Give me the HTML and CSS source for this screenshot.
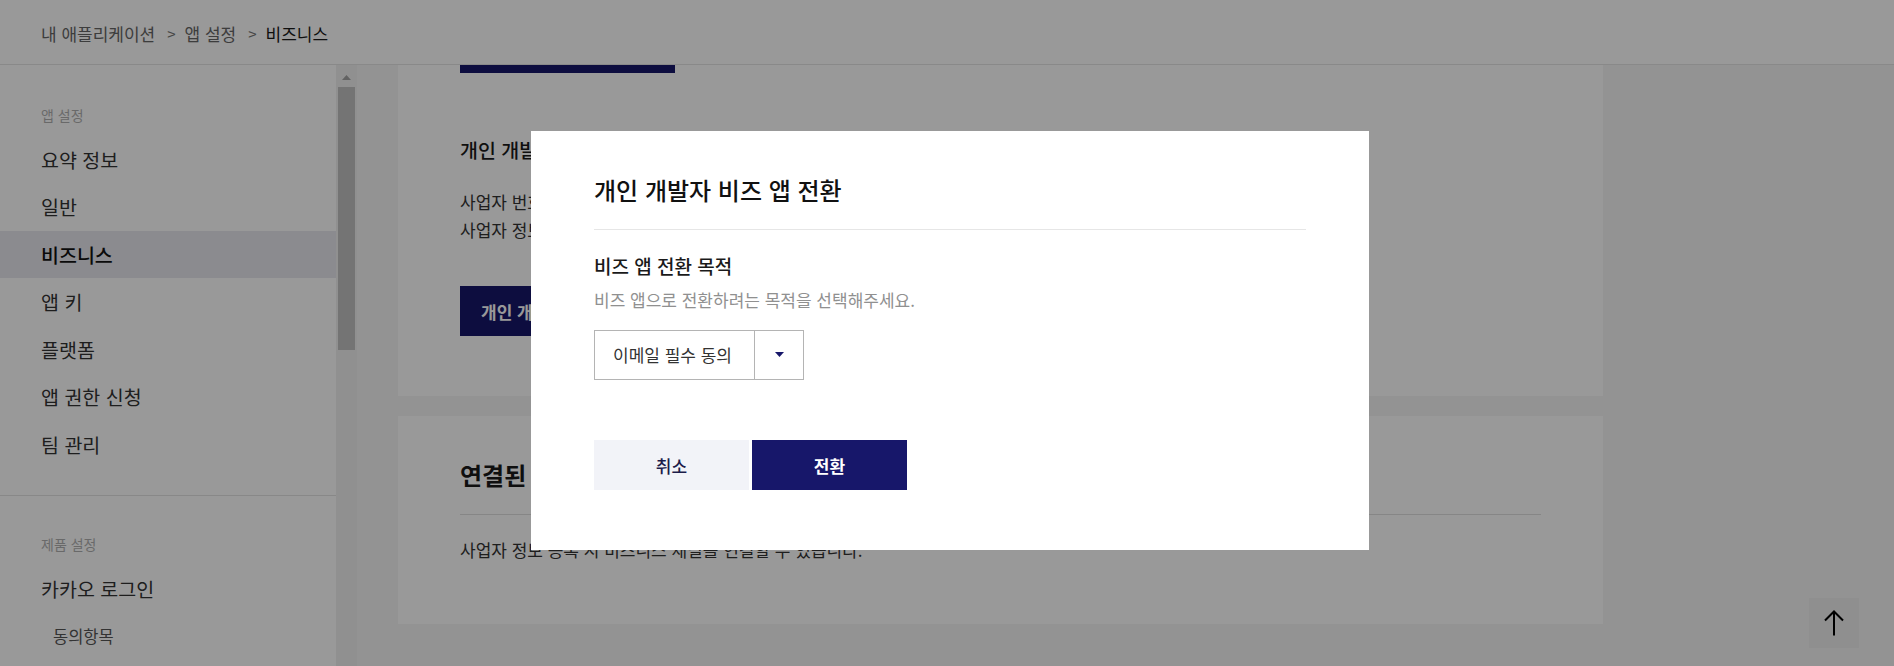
FILE: index.html
```html
<!DOCTYPE html>
<html lang="ko">
<head>
<meta charset="utf-8">
<title>비즈니스 - 앱 설정</title>
<link rel="stylesheet" href="styles.css">
</head>
<body>
<header class="topbar">
  <nav class="crumbs">
    <span class="crumb">내 애플리케이션</span>
    <span class="sep">&gt;</span>
    <span class="crumb">앱 설정</span>
    <span class="sep">&gt;</span>
    <span class="crumb current">비즈니스</span>
  </nav>
</header>

<div class="layout">
  <aside class="sidebar">
    <div class="side-scroll">
      <section class="side-group">
        <div class="side-label">앱 설정</div>
        <ul class="side-list">
          <li class="side-item">요약 정보</li>
          <li class="side-item">일반</li>
          <li class="side-item active">비즈니스</li>
          <li class="side-item">앱 키</li>
          <li class="side-item">플랫폼</li>
          <li class="side-item">앱 권한 신청</li>
          <li class="side-item">팀 관리</li>
        </ul>
      </section>
      <section class="side-group second">
        <div class="side-label">제품 설정</div>
        <ul class="side-list">
          <li class="side-item">카카오 로그인</li>
          <li class="side-item sub">동의항목</li>
        </ul>
      </section>
    </div>
    <div class="scrollbar">
      <div class="sb-arrow"><svg width="9" height="5" viewBox="0 0 9 5"><polygon points="0,5 4.5,0 9,5" fill="#a3a3a3"/></svg></div>
      <div class="sb-thumb"></div>
    </div>
  </aside>

  <main class="main">
    <div class="main-inner">
      <section class="card first">
        <h2 class="card-title">비즈니스 정보</h2>
        <button class="primary-btn wide">사업자 정보 등록</button>

        <h3 class="sub-title">개인 개발자 비즈 앱 전환</h3>
        <p class="card-text">사업자 번호가 없는 개인 개발자도 비즈 앱으로 전환할 수 있습니다.</p>
        <p class="card-text">사업자 정보를 등록하면 비즈 앱으로 자동 전환됩니다.</p>
        <button class="primary-btn convert">개인 개발자 비즈 앱 전환</button>
      </section>

      <section class="card second">
        <h2 class="card-title ruled">연결된 비즈니스 채널</h2>
        <p class="card-text gap">사업자 정보 등록 시 비즈니스 채널을 연결할 수 있습니다.</p>
      </section>
    </div>
  </main>
</div>

<button class="to-top" aria-label="맨 위로">
  <svg width="22" height="26" viewBox="0 0 22 26"><path d="M11 1.5 V25.5 M2 10.5 L11 1.5 L20 10.5" fill="none" stroke="#000" stroke-width="2"/></svg>
</button>

<div class="overlay">
  <div class="modal">
    <div class="modal-head">
      <h2 class="modal-title">개인 개발자 비즈 앱 전환</h2>
    </div>
    <div class="modal-body">
      <h3 class="field-label">비즈 앱 전환 목적</h3>
      <p class="field-desc">비즈 앱으로 전환하려는 목적을 선택해주세요.</p>
      <div class="select">
        <span class="select-value">이메일 필수 동의</span>
        <span class="select-arrow"><svg width="9" height="5" viewBox="0 0 9 5"><polygon points="0,0 9,0 4.5,5" fill="#17176a"/></svg></span>
      </div>
    </div>
    <div class="modal-actions">
      <button class="btn-cancel">취소</button>
      <button class="btn-ok">전환</button>
    </div>
  </div>
</div>
</body>
</html>
```

FILE: styles.css
```css
* { box-sizing: border-box; }

html, body {
  margin: 0;
  height: 100%;
}

body {
  font-family: "Noto Sans CJK KR", "Noto Sans", sans-serif;
  color: #333;
  background: #ffffff;
  overflow: hidden;
}

ul { list-style: none; margin: 0; padding: 0; }
h2, h3, p { margin: 0; }
button { font-family: inherit; border: 0; cursor: pointer; }

/* Top bar */
.topbar {
  height: 65px;
  padding: 22px 41px 0;
  background: #ffffff;
  border-bottom: 1px solid #e4e4e4;
}

.crumbs {
  display: flex;
  align-items: center;
  font-size: 17px;
  line-height: 24px;
  color: #666;
}

.sep {
  margin: 0 9px 0 12px;
  color: #777;
  font-size: 15px;
}

.crumb.current { color: #1a1a1a; }

/* Layout */
.layout {
  display: flex;
  height: calc(100% - 65px);
}

.sidebar {
  width: 357px;
  flex: none;
  display: flex;
}

.side-scroll {
  width: 336px;
  background: #ffffff;
  overflow: hidden;
}

.side-group {
  padding: 40px 0 27px;
}

.side-group.second {
  border-top: 1px solid #e3e3e3;
  padding-top: 38px;
}

.side-label {
  padding-left: 41px;
  font-size: 14px;
  line-height: 20px;
  color: #b0b0b0;
  margin-bottom: 10.5px;
}

.side-group.second .side-label { margin-bottom: 11px; }

.side-item {
  height: 47.5px;
  line-height: 47.5px;
  padding-left: 41px;
  font-size: 19.5px;
  color: #333;
}

.side-item.active {
  background: #e8e8ef;
  color: #111;
  font-weight: 500;
}

.side-item.sub {
  padding-left: 53px;
  font-size: 16.5px;
  color: #555;
}

.scrollbar {
  width: 21px;
  background: #f1f1f1;
  display: flex;
  flex-direction: column;
  align-items: center;
}

.sb-arrow {
  height: 17px;
  display: flex;
  align-items: flex-end;
  justify-content: center;
  padding-bottom: 2px;
}

.sb-thumb {
  margin-top: 5px;
  width: 17px;
  height: 263px;
  background: #c1c1c1;
}

/* Main content */
.main {
  flex: 1;
  background: #f5f6f5;
  overflow: hidden;
}

.main-inner {
  width: 1205px;
  margin: -150px 0 0 41px;
  display: flex;
  flex-direction: column;
  gap: 20px;
}

.card {
  background: #ffffff;
  padding: 50px 62px 60px;
}

.card.second { padding-top: 43px; }

.card-title {
  font-size: 24px;
  line-height: 32px;
  font-weight: 700;
  color: #1a1a1a;
  margin-bottom: 26px;
}

.card-title.ruled {
  margin-bottom: 0;
  padding-bottom: 23px;
  border-bottom: 1px solid #e0e0e0;
}

.primary-btn {
  display: block;
  height: 50px;
  padding: 0 21px;
  background: #17176a;
  color: #ffffff;
  font-size: 17px;
  font-weight: 700;
  text-align: left;
}

.primary-btn.wide { width: 215px; }

.sub-title {
  margin-top: 64px;
  font-size: 19.5px;
  line-height: 26px;
  font-weight: 500;
  color: #1a1a1a;
  margin-bottom: 25px;
}

.card-text {
  font-size: 17px;
  line-height: 28px;
  color: #333;
}

.card-text.gap { margin-top: 21px; }

.primary-btn.convert {
  margin-top: 42px;
  width: 260px;
}

/* Scroll to top */
.to-top {
  position: fixed;
  right: 35px;
  bottom: 18px;
  width: 50px;
  height: 50px;
  background: #eeeeee;
  display: flex;
  align-items: center;
  justify-content: center;
  padding: 0;
}

/* Modal */
.overlay {
  position: fixed;
  inset: 0;
  background: rgba(0, 0, 0, 0.4);
  display: flex;
  align-items: flex-start;
  justify-content: flex-start;
}

.modal {
  margin: 131px 0 0 531px;
  width: 838px;
  height: 419px;
  background: #ffffff;
  padding: 0 63px;
}

.modal-head {
  padding-top: 43px;
  padding-bottom: 23px;
  border-bottom: 1px solid #e6e6e6;
}

.modal-title {
  font-size: 24px;
  line-height: 32px;
  font-weight: 500;
  color: #111;
}

.modal-body {
  padding-top: 23px;
}

.field-label {
  font-size: 19px;
  line-height: 26px;
  font-weight: 500;
  color: #1a1a1a;
}

.field-desc {
  margin-top: 9px;
  font-size: 17px;
  line-height: 24px;
  color: #909090;
}

.select {
  margin-top: 18px;
  width: 210px;
  height: 50px;
  border: 1px solid #b4b4b4;
  display: flex;
}

.select-value {
  flex: 1;
  padding-left: 18px;
  font-size: 17px;
  line-height: 48px;
  color: #333;
  border-right: 1px solid #b4b4b4;
}

.select-arrow {
  width: 48px;
  display: flex;
  align-items: center;
  justify-content: center;
  padding-bottom: 2px;
}

.modal-actions {
  margin-top: 60px;
  display: flex;
  gap: 3px;
}

.btn-cancel, .btn-ok {
  width: 155px;
  height: 50px;
  font-size: 17px;
}

.btn-cancel {
  background: #f2f3f8;
  color: #1c1c4a;
  font-weight: 500;
}

.btn-ok {
  background: #17176a;
  color: #ffffff;
  font-weight: 700;
}
```
